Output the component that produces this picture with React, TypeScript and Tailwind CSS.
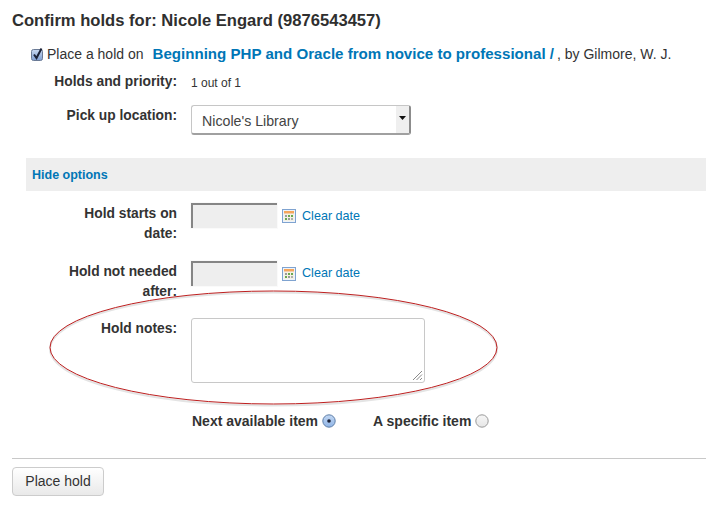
function CalendarIcon() {
  return (
    <svg width="14" height="14" viewBox="0 0 14 14" className="shrink-0">
      <rect x="0.5" y="0.5" width="13" height="13" fill="#eef3fa" stroke="#7fa3d0" />
      <rect x="2" y="2" width="10" height="2.5" fill="#f5a65b" />
      <rect x="2" y="5" width="10" height="7" fill="#f4f1e4" />
      <rect x="3" y="6" width="2" height="2" fill="#9a9a9a" />
      <rect x="6" y="6" width="2" height="2" fill="#6aa84f" />
      <rect x="9" y="6" width="2" height="2" fill="#6aa84f" />
      <rect x="3" y="9" width="2" height="2" fill="#6aa84f" />
      <rect x="6" y="9" width="2" height="2" fill="#9a9a9a" />
      <rect x="9" y="9" width="2" height="2" fill="#b0b0b0" />
    </svg>
  );
}

function DateField({ second }: { second?: boolean }) {
  return (
    <div className="flex items-start">
      <div className="w-[86px] h-[25px] bg-[#eeeeee] border-t-2 border-l-2 border-[#858585] shadow-[0_0_0_1px_#fafafa]" />
      <div className="ml-[5px] mt-[6px]"><CalendarIcon /></div>
      <a className={second ? "ml-[6px] mt-[5px] text-[12.6px] leading-[14px] text-[#0076b6]" : "ml-[6px] mt-[6px] text-[12.6px] leading-[14px] text-[#0076b6]"}>Clear date</a>
    </div>
  );
}

function Label({ children }: { children: React.ReactNode }) {
  return (
    <div className="w-[165px] shrink-0 pt-px text-right text-[13.8px] leading-[20px] font-bold text-[#333333]">{children}</div>
  );
}

export default function App() {
  return (
    <div className="relative w-[706px] h-[506px] overflow-hidden bg-white text-[#333333] font-['Liberation_Sans',Arial,sans-serif]">
      <div className="pl-3 pt-[12px]">
        <h1 className="text-[16.6px] leading-[18px] font-bold text-[#2f2f2f] whitespace-nowrap">Confirm holds for: Nicole Engard (9876543457)</h1>

        <div className="mt-[14px] ml-[19px] flex items-start h-[20px]">
          <svg width="13" height="14" viewBox="0 0 13 14" className="mt-[3px] shrink-0">
            <defs>
              <linearGradient id="cb" x1="0" y1="0" x2="0" y2="1">
                <stop offset="0" stopColor="#c9d9f0" />
                <stop offset="1" stopColor="#7f9fd2" />
              </linearGradient>
            </defs>
            <rect x="0.5" y="2.5" width="11" height="11" rx="2" fill="url(#cb)" stroke="#6a7a95" />
            <path d="M3 7.5 L5.5 11 L10.5 1.5" fill="none" stroke="#1b2238" strokeWidth="2" />
          </svg>
          <span className="ml-[3px] text-[14px] leading-[20px] whitespace-nowrap">Place a hold on</span>
          <a className="ml-[9px] text-[15.1px] leading-[20px] font-bold text-[#0076b6] whitespace-nowrap">Beginning PHP and Oracle from novice to professional /</a>
          <span className="ml-[3px] text-[14px] leading-[20px] whitespace-nowrap">, by Gilmore, W. J.</span>
        </div>

        <div className="mt-[7px] flex items-start h-[20px]">
          <Label>Holds and priority:</Label>
          <div className="ml-[14px] mt-[3px] text-[12px] leading-[18px]">1 out of 1</div>
        </div>

        <div className="mt-[14px] flex items-start">
          <Label>Pick up location:</Label>
          <div className="ml-[14px] w-[220px] h-[30px] flex rounded-[3px] border border-[#c6c6c6] border-r-2 border-b-2 border-r-[#8c8c8c] border-b-[#a0a0a0] bg-white">
            <div className="flex-1 pl-[10px] text-[14.2px] leading-[31px] text-[#444444]">Nicole&#39;s Library</div>
            <div className="w-[13px] bg-[#efefef] flex items-center justify-center">
              <svg width="7" height="4" viewBox="0 0 7 4" className="mb-[4px]"><path d="M0 0H7L3.5 4Z" fill="#111111" /></svg>
            </div>
          </div>
        </div>
      </div>

      <div className="mt-[23px] ml-[26px] h-[33px] bg-[#eeeeee] pl-[6px] text-[12.5px] leading-[34px] font-bold text-[#0076b6]">Hide options</div>

      <div className="pl-3">
        <div className="mt-[12px] flex items-start h-[58px]">
          <Label>Hold starts on<br />date:</Label>
          <div className="ml-[14px]"><DateField /></div>
        </div>
        <div className="flex items-start h-[57px]">
          <Label>Hold not needed<br />after:</Label>
          <div className="ml-[14px]"><DateField second /></div>
        </div>

        <div className="flex items-start">
          <Label>Hold notes:</Label>
          <div className="ml-[14px] relative w-[234px] h-[65px] rounded-[3px] border border-[#c8c8c8] bg-white">
            <svg width="11" height="11" viewBox="0 0 11 11" className="absolute right-[1px] bottom-[1px]">
              <path d="M1 10L10 1M4.5 10L10 4.5M8 10L10 8" stroke="#8a8a8a" strokeWidth="1" fill="none" />
            </svg>
          </div>
        </div>

        <div className="mt-[28px] ml-[180px] flex items-center h-[20px] text-[14px] font-bold text-[#333333] whitespace-nowrap">
          <span>Next available item</span>
          <svg width="14" height="14" viewBox="0 0 14 14" className="ml-[4px]">
            <defs>
              <linearGradient id="rb" x1="0" y1="0" x2="0" y2="1">
                <stop offset="0" stopColor="#c3d8f3" />
                <stop offset="1" stopColor="#8fb4e6" />
              </linearGradient>
              <linearGradient id="rg" x1="0" y1="0" x2="0" y2="1">
                <stop offset="0" stopColor="#f7f7f7" />
                <stop offset="1" stopColor="#e6e6e6" />
              </linearGradient>
            </defs>
            <circle cx="7" cy="7" r="6.2" fill="url(#rb)" stroke="#5f7fa8" />
            <circle cx="7" cy="7" r="1.8" fill="#1b2238" />
          </svg>
          <span className="ml-[37px]">A specific item</span>
          <svg width="14" height="14" viewBox="0 0 14 14" className="ml-[4px]">
            <circle cx="7" cy="7" r="6.2" fill="url(#rg)" stroke="#9a9a9a" />
          </svg>
        </div>

        <div className="mt-[27px] h-px bg-[#c8c8c8]" />
        <button className="mt-[8px] block w-[92px] h-[29px] rounded-[4px] border border-[#cccccc] bg-gradient-to-b from-white to-[#e9e9e9] text-[14px] text-[#333333]">Place hold</button>
      </div>

      <svg width="706" height="506" viewBox="0 0 706 506" className="absolute left-0 top-0 pointer-events-none">
        <ellipse cx="273.5" cy="349" rx="223.5" ry="56.5" fill="none" stroke="#e4e4e4" strokeWidth="2" />
        <ellipse cx="273.5" cy="347.5" rx="223.5" ry="56.5" fill="none" stroke="#bd1f1f" strokeWidth="1" />
      </svg>
    </div>
  );
}
